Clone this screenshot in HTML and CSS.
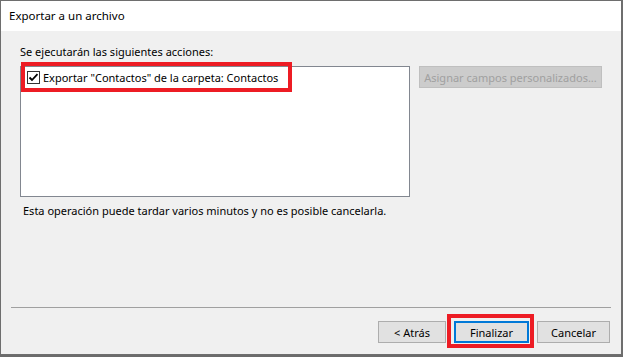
FILE: index.html
```html
<!DOCTYPE html>
<html lang="es">
  <head>
    <meta charset="UTF-8" />
    <meta name="viewport" content="width=device-width, initial-scale=1.0" />
    <title>Exportar a un archivo</title>
    <link rel="stylesheet" href="styles.css">
  </head>
  <body>
    <div class="window">
      <div class="titlebar">Exportar a un archivo</div>

      <div class="content">
        <div class="actions-label">Se ejecutarán las siguientes acciones:</div>

        <div class="actions-row">
          <div class="listbox">
            <div class="list-item">
              <svg class="checkbox" width="13" height="13" viewBox="0 0 13 13">
                <rect x="0.5" y="0.5" width="12" height="12" fill="#fff" stroke="#333" />
                <path d="M2.5 6.5 L5 9 L10.5 3.2" fill="none" stroke="#000" stroke-width="1.8" />
              </svg>
              <span>Exportar "Contactos" de la carpeta: Contactos</span>
            </div>
            <div class="highlight highlight-item"></div>
          </div>

          <button class="btn btn-disabled" disabled>Asignar campos personalizados...</button>
        </div>

        <div class="note">Esta operación puede tardar varios minutos y no es posible cancelarla.</div>

        <div class="separator"></div>

        <div class="footer">
          <button class="btn btn-back">&lt; Atrás</button>
          <div class="finish-wrap">
            <button class="btn btn-default">Finalizar</button>
            <div class="highlight highlight-finish"></div>
          </div>
          <button class="btn btn-cancel">Cancelar</button>
        </div>
      </div>
    </div>
  </body>
</html>
```

FILE: styles.css
```css
body {
  margin: 0;
  background-color: #6b6b6b;
  font-family: "Noto Sans", "Liberation Sans", sans-serif;
  font-size: 11px;
  color: #000;
}

.window {
  width: 620px;
  height: 353px;
  border: 1px solid #6e6e6e;
  border-right-width: 2px;
  display: flex;
  flex-direction: column;
  background-color: #f0f0f0;
}

.titlebar {
  height: 30px;
  line-height: 30px;
  padding-left: 8px;
  background-color: #fff;
  font-size: 11.5px;
  white-space: nowrap;
}

.content {
  flex: 1;
  display: flex;
  flex-direction: column;
  padding: 12px 10px 0 19px;
}

.actions-label {
  height: 17px;
  line-height: 17px;
}

.actions-row {
  display: flex;
  align-items: flex-start;
  gap: 8px;
  margin-top: 6px;
}

.listbox {
  position: relative;
  width: 388px;
  height: 129px;
  background-color: #fff;
  border: 1px solid #828790;
}

.list-item {
  display: flex;
  align-items: center;
  gap: 3px;
  margin: 2px 0 0 6px;
  height: 16px;
  white-space: nowrap;
}

.checkbox {
  flex-shrink: 0;
}

.highlight {
  position: absolute;
  border: 4px solid #ed1c24;
  pointer-events: none;
}

.highlight-item {
  left: 0;
  top: -5px;
  width: 263px;
  height: 22px;
}

.btn {
  font-family: inherit;
  font-size: 11px;
  height: 22px;
  padding: 0 4px;
  background-color: #e1e1e1;
  border: 1px solid #adadad;
  color: #000;
  white-space: nowrap;
}

.btn-disabled {
  width: 183px;
  margin-left: 1px;
  background-color: #cccccc;
  border-color: #bfbfbf;
  color: #a0a0a0;
}

.note {
  margin: 5px 0 0 3px;
  height: 17px;
  line-height: 17px;
}

.separator {
  margin: auto 0 0 -9px;
  width: 600px;
  height: 1px;
  background-color: #a0a0a0;
}

.footer {
  display: flex;
  justify-content: flex-end;
  gap: 8px;
  margin: 13px 1px 11px 0;
}

.btn-back {
  width: 68px;
}

.finish-wrap {
  position: relative;
}

.btn-default {
  width: 75px;
  border: 2px solid #0078d7;
}

.highlight-finish {
  left: -7px;
  top: -7px;
  width: 79px;
  height: 26px;
}

.btn-cancel {
  width: 73px;
}
```
